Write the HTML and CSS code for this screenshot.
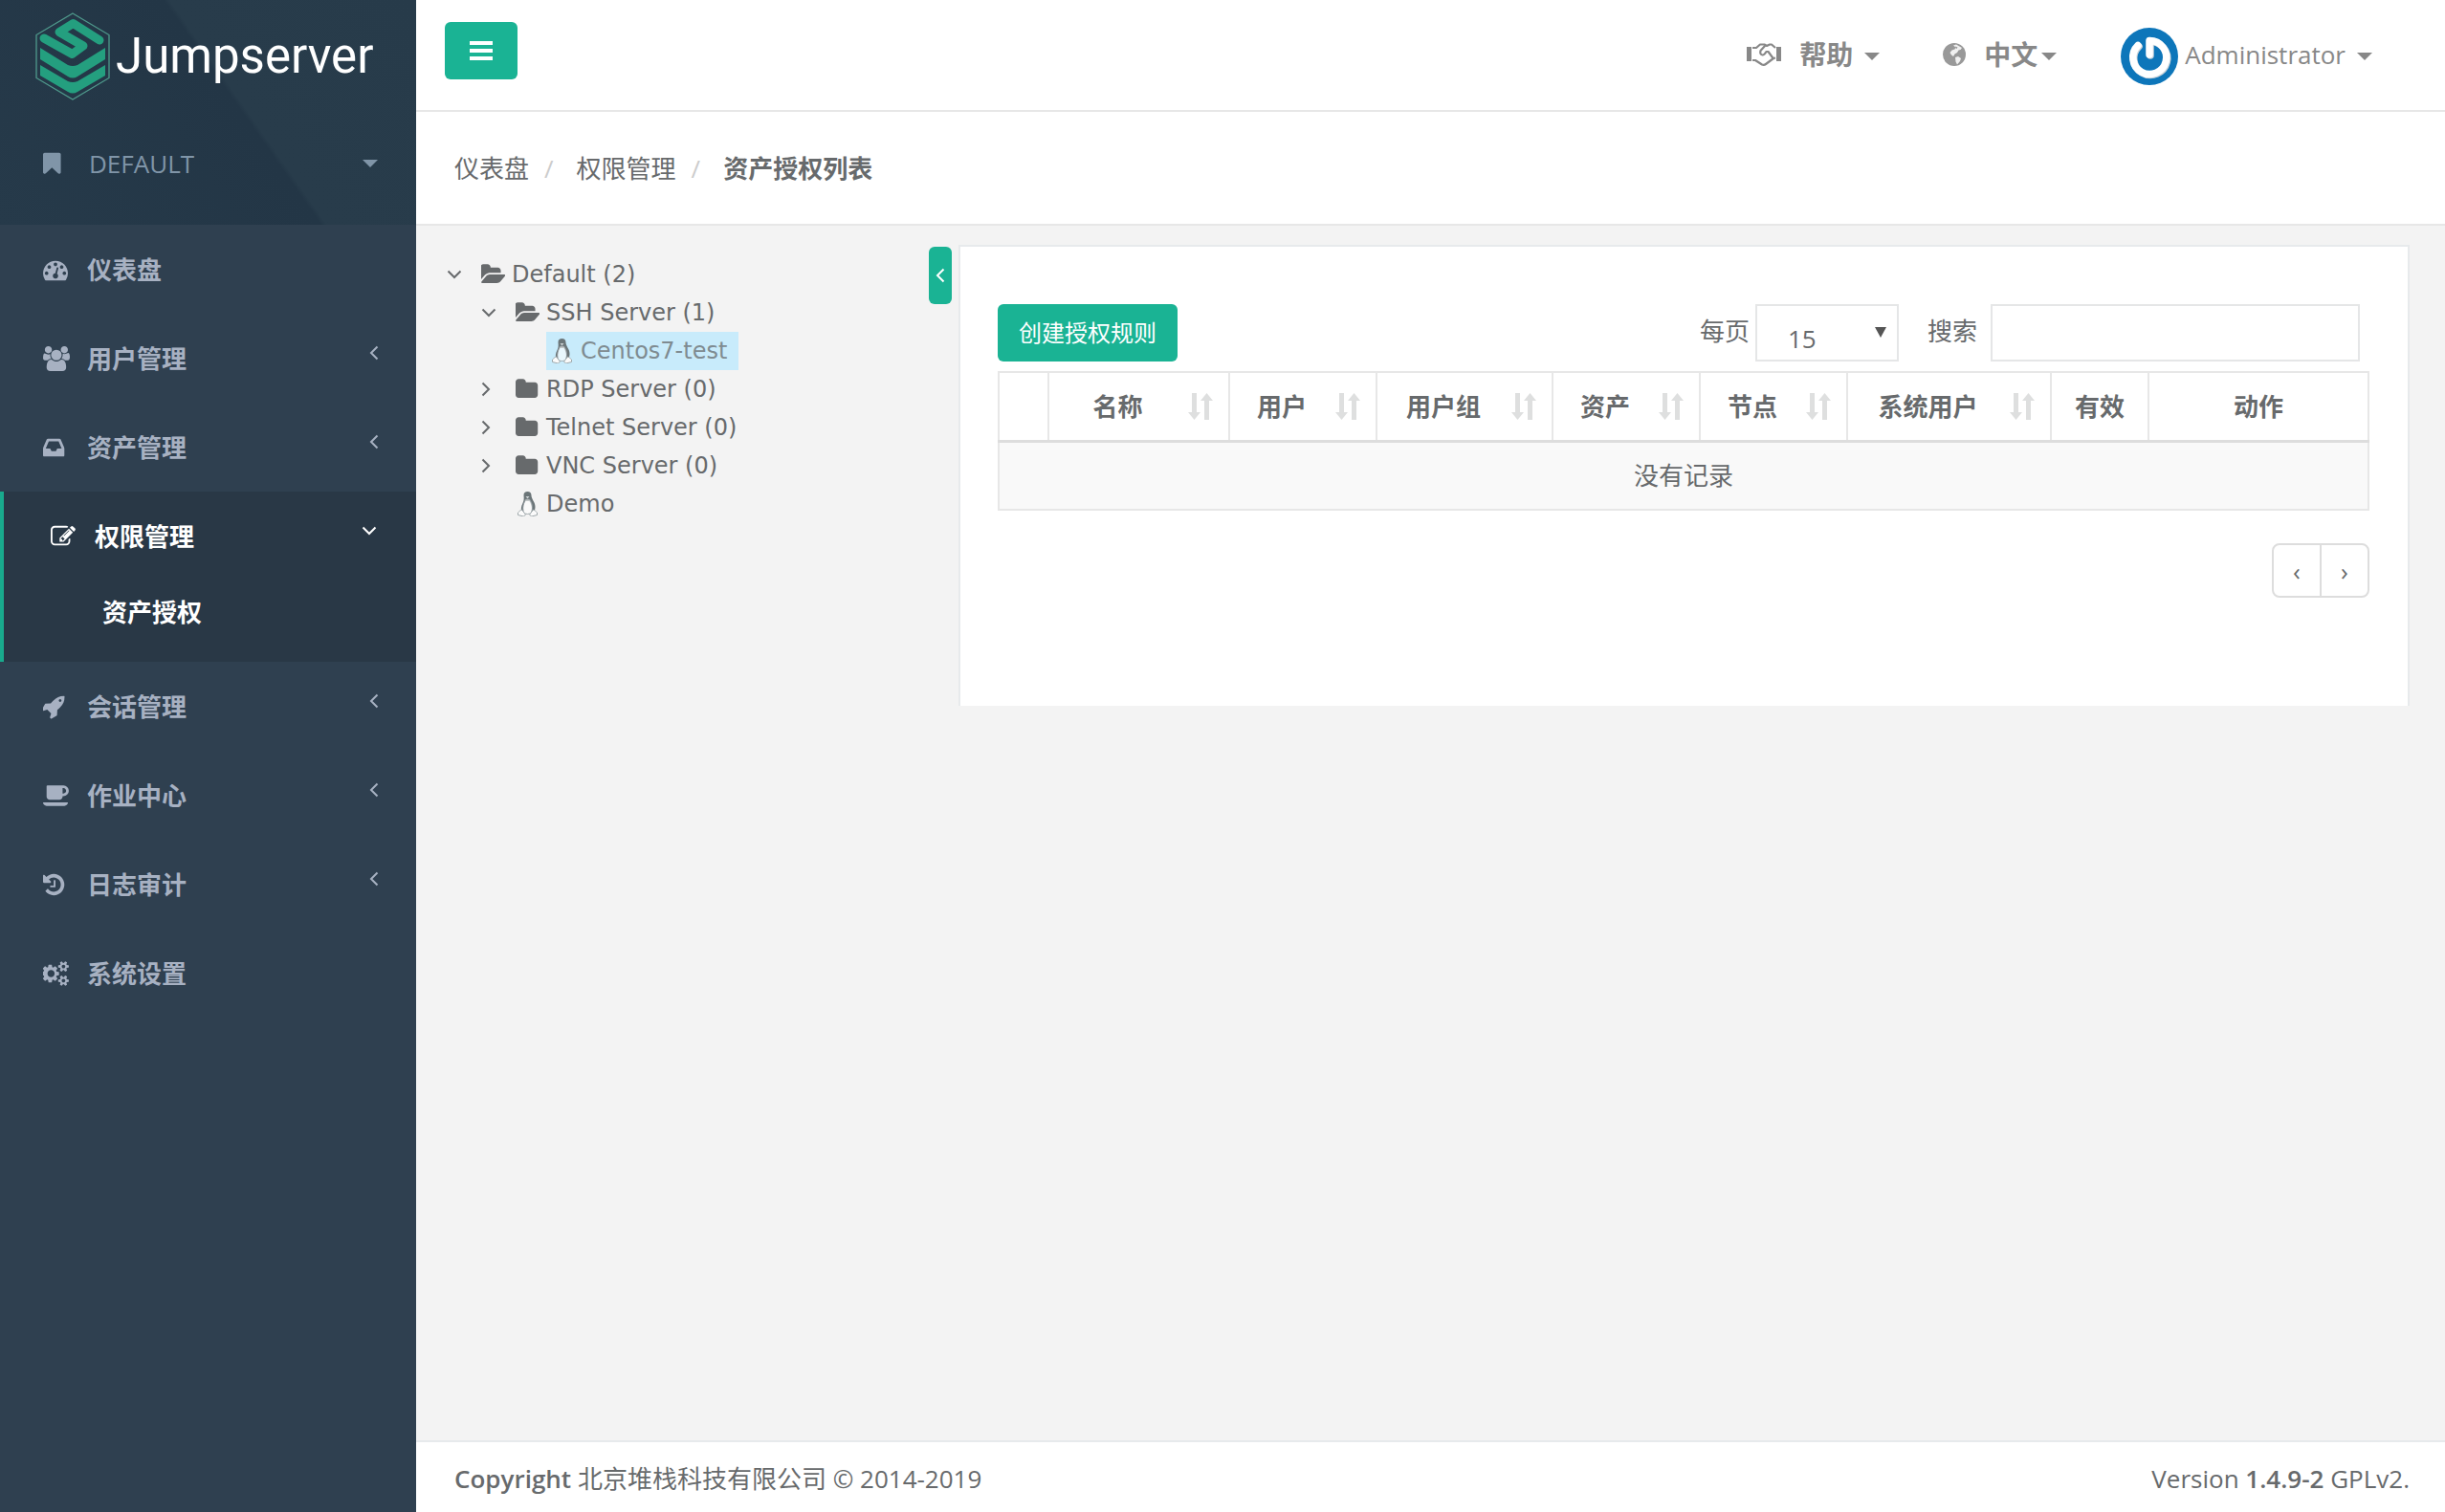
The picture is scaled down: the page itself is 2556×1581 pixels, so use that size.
FILE: index.html
```html
<!DOCTYPE html>
<html lang="zh-CN">
<head>
<meta charset="utf-8">
<title>Jumpserver</title>
<link rel="stylesheet" href="styles.css">
</head>
<body>
<svg class="sprite" aria-hidden="true">
  <symbol id="folder" viewBox="64 0 1792 1792" preserveAspectRatio="xMinYMid"><path d="M1728 608v704q0 92-66 158t-158 66h-1216q-92 0-158-66t-66-158v-960q0-92 66-158t158-66h320q92 0 158 66t66 158v32h672q92 0 158 66t66 158z"/></symbol>
  <symbol id="folder-open" viewBox="0 0 1792 1792" preserveAspectRatio="xMinYMid"><path d="M1815 952q0 31-31 66l-336 396q-43 51-120.5 86.5t-143.5 35.5h-1088q-34 0-60.5-13t-26.5-43q0-31 31-66l336-396q43-51 120.5-86.5t143.5-35.5h1088q34 0 60.5 13t26.5 43zm-343-344v160h-832q-94 0-197 47.5t-164 119.5l-337 396-5 6q0-4-.5-12.5t-.5-12.5v-960q0-92 66-158t158-66h320q92 0 158 66t66 158v32h544q92 0 158 66t66 158z"/></symbol>
  <symbol id="left" viewBox="0 0 10 16"><path d="M8.500 1.500L2 8l6.500 6.500" fill="none" stroke="currentColor" stroke-width="2"/></symbol>
  <symbol id="right" viewBox="0 0 10 16"><path d="M1.500 1.500L8 8l-6.500 6.500" fill="none" stroke="currentColor" stroke-width="2"/></symbol>
  <symbol id="down" viewBox="0 0 16 10"><path d="M1.500 1.500L8 8l6.500-6.500" fill="none" stroke="currentColor" stroke-width="2"/></symbol>
  <symbol id="sort" viewBox="0 0 26 28"><path d="M4 0h5v20h4l-6.500 8L0 20h4zM17 28V8h-4L19.500 0 26 8h-4v20z"/></symbol>
  <symbol id="tux" viewBox="0 0 22 26"><path d="M7 4c0-3 1.500-4 4-4s4 1.500 4 4c0 4 4 7 4 12 0 3-1 5-2 6l-2-1c1-4 0-8-2-11H9c-2 3-3 6-2 10l-2 1c-1-3-1-5 1-9 1-2 1.500-4 1-8z" fill="#6b7578"/><path d="M9 8h4c3 4 4 9 2 14-2 2-6 2-8 0-2-5 0-10 2-14z" fill="#fff" fill-opacity=".6" stroke="#8d969a" stroke-width=".8"/><path d="M1 22c1-1 3-3 4-3l4 5-2 2-6-1.500zM21 22c-1-1-3-3-4-3l-4 5 2 2 6-1.500z" fill="#fbfbfb" stroke="#9fa8ab"/><path d="M9 5h4l-2 2.500z" fill="#ccd2d4"/></symbol>
</svg>

<nav class="sidebar">
  <div class="brand">
    <a class="logo" href="#">
      <svg class="logo-mark" viewBox="0 0 78 92" aria-hidden="true">
        <path d="M39 1L77 23.500v45L39 91 1 68.500v-45z" fill="none" stroke="#4f9a8c" stroke-width="1.300"/>
        <path d="M67 29L39.500 11.500 25 20.500 50 35 38.500 43.500 9 27" fill="none" stroke="#249f7f" stroke-width="9" stroke-linejoin="round" stroke-linecap="round"/>
        <g fill="#249f7f">
          <path d="M5 37l29 18q5 2 10 0l29-18v12L44 67q-5 3-10 0L5 49z"/>
          <path d="M5 55l29 17q5 2 10 0l29-17v11L44 83q-5 3-10 0L5 66z"/>
        </g>
      </svg>
      <span class="logo-text">Jumpserver</span>
    </a>
    <a class="org" href="#">
      <svg class="icon" viewBox="256 0 1536 1792" preserveAspectRatio="xMinYMid"><path d="M1420 128q23 0 44 9 33 13 52.500 41t19.500 62v1289q0 34-19.500 62t-52.500 41q-19 8-44 8-48 0-83-32l-441-424-441 424q-36 33-83 33-23 0-44-9-33-13-52.500-41t-19.500-62v-1289q0-34 19.500-62t52.500-41q21-9 44-9h1048z"/></svg>
      <span class="label">DEFAULT</span>
      <span class="caret"></span>
    </a>
  </div>
  <ul class="menu">
    <li><a href="#"><svg class="icon" viewBox="0 0 1920 1792" preserveAspectRatio="xMinYMid"><path d="M384 1152q0-53-37.500-90.500t-90.500-37.500-90.500 37.500-37.500 90.500 37.500 90.500 90.500 37.500 90.500-37.500 37.500-90.500zm192-448q0-53-37.500-90.500t-90.500-37.500-90.500 37.500-37.500 90.500 37.500 90.500 90.500 37.500 90.500-37.500 37.500-90.500zm428 481l101-382q6-26-7.500-48.500t-38.500-29.500-48 6.500-30 39.500l-101 382q-60 5-107 43.500t-63 98.500q-20 77 20 146t117 89 146-20 89-117q16-60-6-117t-72-91zm660-33q0-53-37.500-90.500t-90.500-37.500-90.500 37.500-37.500 90.500 37.500 90.500 90.500 37.500 90.500-37.500 37.500-90.500zm-640-640q0-53-37.500-90.500t-90.500-37.500-90.500 37.500-37.500 90.500 37.500 90.500 90.500 37.500 90.500-37.500 37.500-90.500zm448 192q0-53-37.500-90.500t-90.500-37.500-90.500 37.500-37.500 90.500 37.500 90.500 90.500 37.500 90.500-37.500 37.500-90.500zm320 448q0 261-141 483-19 29-54 29h-1402q-35 0-54-29-141-221-141-483 0-182 71-348t191-286 286-191 348-71 348 71 286 191 191 286 71 348z"/></svg><span class="label">仪表盘</span></a></li>
    <li><a href="#"><svg class="icon" viewBox="0 0 1920 1792" preserveAspectRatio="xMinYMid"><path d="M593 896q-162 5-265 128h-134q-82 0-138-40.500t-56-118.500q0-353 124-353 6 0 43.500 21t97.500 42.500 119 21.500q67 0 133-23-5 37-5 66 0 159 93 293zm1071 637q0 120-73 189.500t-194 69.500h-874q-121 0-194-69.500t-73-189.500q0-53 3.500-103.500t14-109 26.500-108.500 43-97.500 62-81 85.500-53.500 111.500-20q10 0 43 21.500t73 48 107 48 135 21.500 135-21.500 107-48 73-48 43-21.500q61 0 111.500 20t85.500 53.500 62 81 43 97.500 26.500 108.500 14 109 3.500 103.500zm-1024-1277q0 106-75 181t-181 75-181-75-75-181 75-181 181-75 181 75 75 181zm704 384q0 159-112.500 271.500t-271.500 112.500-271.500-112.500-112.500-271.500 112.500-271.500 271.500-112.500 271.500 112.500 112.500 271.500zm576 225q0 78-56 118.500t-138 40.500h-134q-103-123-265-128 93-134 93-293 0-29-5-66 66 23 133 23 59 0 119-21.500t97.500-42.500 43.500-21q124 0 124 353zm-128-609q0 106-75 181t-181 75-181-75-75-181 75-181 181-75 181 75 75 181z"/></svg><span class="label">用户管理</span><svg class="arrow"><use href="#left"/></svg></a></li>
    <li><a href="#"><svg class="icon" viewBox="128 0 1792 1792" preserveAspectRatio="xMinYMid"><path d="M1151 960h316q-1-3-2.500-8t-2.500-8l-212-496h-708l-212 496q-1 2-2.500 8t-2.500 8h316l95 192h320zm513 30v482q0 26-19 45t-45 19h-1408q-26 0-45-19t-19-45v-482q0-62 25-123l238-552q10-25 36.500-42t52.500-17h832q26 0 52.500 17t36.500 42l238 552q25 61 25 123z"/></svg><span class="label">资产管理</span><svg class="arrow"><use href="#left"/></svg></a></li>
    <li class="active">
      <a href="#"><svg class="icon" viewBox="0 0 1920 1792" preserveAspectRatio="xMinYMid"><path d="M888 1184l116-116-152-152-116 116v56h96v96h56zm440-720q-16-16-33 1l-350 350q-17 17-1 33t33-1l350-350q17-17 1-33zm80 594v190q0 119-84.500 203.500t-203.500 84.500h-832q-119 0-203.500-84.500t-84.500-203.500v-832q0-119 84.500-203.500t203.500-84.500h832q63 0 117 25 15 7 18 23 3 17-9 29l-49 49q-14 14-32 8-23-6-45-6h-832q-66 0-113 47t-47 113v832q0 66 47 113t113 47h832q66 0 113-47t47-113v-126q0-13 9-22l64-64q15-15 35-7t20 29zm-96-738l288 288-672 672h-288v-288zm444 132l-92 92-288-288 92-92q28-28 68-28t68 28l152 152q28 28 28 68t-28 68z"/></svg><span class="label">权限管理</span><svg class="arrow wide"><use href="#down"/></svg></a>
      <ul class="submenu"><li><a href="#">资产授权</a></li></ul>
    </li>
    <li><a href="#"><svg class="icon" viewBox="112 0 1792 1792" preserveAspectRatio="xMinYMid"><path d="M1440 448q0-40-28-68t-68-28-68 28-28 68 28 68 68 28 68-28 28-68zm224-288q0 249-75.500 430.500t-253.500 360.500q-81 80-195 176l-20 379q-2 16-16 26l-384 224q-7 4-16 4-12 0-23-9l-64-64q-13-14-8-32l85-276-281-281-276 85q-3 1-9 1-14 0-23-9l-64-64q-17-19-5-39l224-384q10-14 26-16l379-20q96-114 176-195 188-187 358-258t431-71q14 0 24 9.500t10 22.500z"/></svg><span class="label">会话管理</span><svg class="arrow"><use href="#left"/></svg></a></li>
    <li><a href="#"><svg class="icon" viewBox="0 0 1920 1792" preserveAspectRatio="xMinYMid"><path d="M1664 544q0-80-56-136t-136-56h-64v384h64q80 0 136-56t56-136zm-1664 832h1792q0 106-75 181t-181 75h-1280q-106 0-181-75t-75-181zm1856-832q0 159-112.500 271.500t-271.500 112.500h-64v32q0 92-66 158t-158 66h-704q-92 0-158-66t-66-158v-736q0-26 19-45t45-19h1152q159 0 271.500 112.500t112.500 271.500z"/></svg><span class="label">作业中心</span><svg class="arrow"><use href="#left"/></svg></a></li>
    <li><a href="#"><svg class="icon" viewBox="128 0 1792 1792" preserveAspectRatio="xMinYMid"><path d="M1664 896q0 156-61 298t-164 245-245 164-298 61q-172 0-327-72.500t-264-204.500q-7-10-6.500-22.500t8.500-20.500l137-138q10-9 25-9 16 2 23 12 73 95 179 147t225 52q104 0 198.500-40.500t163.500-109.500 109.500-163.500 40.500-198.500-40.500-198.500-109.500-163.500-163.500-109.500-198.500-40.500q-98 0-188 35.500t-160 101.500l137 138q31 30 14 69-17 40-59 40h-448q-26 0-45-19t-19-45v-448q0-42 40-59 39-17 69 14l130 129q107-101 244.500-156.500t284.500-55.500q156 0 298 61t245 164 164 245 61 298zm-640-288v448q0 14-9 23t-23 9h-320q-14 0-23-9t-9-23v-64q0-14 9-23t23-9h224v-352q0-14 9-23t23-9h64q14 0 23 9t9 23z"/></svg><span class="label">日志审计</span><svg class="arrow"><use href="#left"/></svg></a></li>
    <li><a href="#"><svg class="icon" viewBox="0 0 1920 1792" preserveAspectRatio="xMinYMid"><path d="M832 896q0-106-75-181t-181-75-181 75-75 181 75 181 181 75 181-75 75-181zm768 512q0-52-38-90t-90-38-90 38-38 90q0 53 37.500 90.500t90.500 37.500 90.500-37.500 37.500-90.500zm0-1024q0-52-38-90t-90-38-90 38-38 90q0 53 37.500 90.500t90.500 37.500 90.500-37.500 37.500-90.500zm-448 421v185q0 10-7 19.500t-16 10.500l-155 24q-11 35-32 76 34 48 90 115 7 11 7 20 0 12-7 19-23 30-82.500 89.500t-78.500 59.500q-11 0-21-7l-115-90q-37 19-77 31-11 108-23 155-7 24-30 24h-186q-11 0-20-7.500t-10-17.500l-23-153q-34-10-75-31l-118 89q-7 7-20 7-11 0-21-8-144-133-144-160 0-9 7-19 10-14 41-53t47-61q-23-44-35-82l-152-24q-10-1-17-9.500t-7-19.500v-185q0-10 7-19.500t16-10.500l155-24q11-35 32-76-34-48-90-115-7-11-7-20 0-12 7-20 22-30 82-89t79-59q11 0 21 7l115 90q34-18 77-32 11-108 23-154 7-24 30-24h186q11 0 20 7.500t10 17.500l23 153q34 10 75 31l118-89q8-7 20-7 11 0 21 8 144 133 144 160 0 8-7 19-12 16-42 54t-45 60q23 48 34 82l152 23q10 2 17 10.500t7 19.500zm704 533v140q0 16-149 31-12 27-30 52 51 113 51 138 0 4-4 7-122 71-124 71-8 0-46-47t-52-68q-20 2-30 2t-30-2q-14 21-52 68t-46 47q-2 0-124-71-4-3-4-7 0-25 51-138-18-25-30-52-149-15-149-31v-140q0-16 149-31 13-29 30-52-51-113-51-138 0-4 4-7 4-2 35-20t59-34 30-16q8 0 46 46.500t52 67.500q20-2 30-2t30 2q51-71 92-112l6-2q4 0 124 70 4 3 4 7 0 25-51 138 17 23 30 52 149 15 149 31zm0-1024v140q0 16-149 31-12 27-30 52 51 113 51 138 0 4-4 7-122 71-124 71-8 0-46-47t-52-68q-20 2-30 2t-30-2q-14 21-52 68t-46 47q-2 0-124-71-4-3-4-7 0-25 51-138-18-25-30-52-149-15-149-31v-140q0-16 149-31 13-29 30-52-51-113-51-138 0-4 4-7 4-2 35-20t59-34 30-16q8 0 46 46.500t52 67.500q20-2 30-2t30 2q51-71 92-112l6-2q4 0 124 70 4 3 4 7 0 25-51 138 17 23 30 52 149 15 149 31z"/></svg><span class="label">系统设置</span></a></li>
  </ul>
</nav>

<div class="page">
  <header class="topbar">
    <button class="toggle-menu" type="button" aria-label="切换菜单"><svg viewBox="0 0 24 20" aria-hidden="true"><path d="M0 0h24v4H0zM0 8h24v4H0zM0 16h24v4H0z"/></svg></button>
    <div class="top-links">
      <a class="top-link help" href="#">
        <svg class="handshake" viewBox="0 0 36 24"><path d="M0 4h5v15H0zM31 4h5v15h-5z"/><path d="M6 5h4l4-3.500h4.500L21 3l3-1.500h2L30 5M6 18h3l7 4.500q2 1 4-.5l8-6 2-.500M19 3l-4.500 5q-1 4 2 4.500 2 0 4-3.500h2l5.500 7.500" fill="none" stroke="currentColor" stroke-width="2.200" stroke-linejoin="round"/></svg>
        <strong>帮助</strong><span class="caret"></span>
      </a>
      <a class="top-link lang" href="#">
        <svg class="globe" viewBox="0 0 24 24"><circle cx="12" cy="12" r="12"/><path d="M11 2.500l3-1 2.500 1.500 3.500 2-1.500 2-2 .5L15 10l-2.500 1.500L11 14l-2-1.500L7.500 10l2-2.500 3-1 1-2zM13 15l3-1 3 2-1 3-3 3.500-1.500-3z" fill="#fff" opacity=".85"/><path d="M13.500 3.500l2 1-1 1.500-1.500-1z"/></svg>
        <strong>中文</strong><span class="caret"></span>
      </a>
      <a class="top-link user" href="#">
        <svg class="avatar" viewBox="0 0 60 60"><circle cx="30" cy="30" r="30" fill="#0d76ba"/><g fill="none" stroke-width="7.500" stroke-linecap="round" stroke-linejoin="round"><path d="M19 19.500A17.500 17.500 0 1 0 31 14.500V29" stroke="#c9d3da"/><path d="M18 18.500A17.500 17.500 0 1 0 30 13.500V28" stroke="#fff"/></g></svg>
        <span>Administrator</span><span class="caret"></span>
      </a>
    </div>
  </header>

  <ol class="breadcrumb">
    <li><a href="#">仪表盘</a></li>
    <li><a href="#">权限管理</a></li>
    <li><strong>资产授权列表</strong></li>
  </ol>

  <main class="content">
    <ul class="tree">
      <li>
        <a href="#"><svg class="tw"><use href="#down"/></svg><svg class="node-icon"><use href="#folder-open"/></svg>Default (2)</a>
        <ul>
          <li>
            <a href="#"><svg class="tw"><use href="#down"/></svg><svg class="node-icon"><use href="#folder-open"/></svg>SSH Server (1)</a>
            <ul><li class="leaf"><a class="selected" href="#"><svg class="node-icon"><use href="#tux"/></svg>Centos7-test</a></li></ul>
          </li>
          <li><a href="#"><svg class="tw closed"><use href="#right"/></svg><svg class="node-icon"><use href="#folder"/></svg>RDP Server (0)</a></li>
          <li><a href="#"><svg class="tw closed"><use href="#right"/></svg><svg class="node-icon"><use href="#folder"/></svg>Telnet Server (0)</a></li>
          <li><a href="#"><svg class="tw closed"><use href="#right"/></svg><svg class="node-icon"><use href="#folder"/></svg>VNC Server (0)</a></li>
          <li class="leaf"><a href="#"><svg class="node-icon"><use href="#tux"/></svg>Demo</a></li>
        </ul>
      </li>
    </ul>
    <button class="split" type="button" aria-label="收起"><svg><use href="#left"/></svg></button>
    <section class="panel">
      <div class="tools">
        <button class="create" type="button">创建授权规则</button>
        <div class="filters">
          <label for="size">每页</label>
          <span class="select-box"><select id="size"><option>15</option><option>25</option><option>50</option></select></span>
          <label class="search-label" for="search">搜索</label>
          <input id="search" type="text">
        </div>
      </div>
      <table>
        <colgroup><col class="c-check"><col class="c-name"><col class="c-std"><col class="c-group"><col class="c-std"><col class="c-std"><col class="c-sys"><col class="c-valid"><col></colgroup>
        <thead><tr>
          <th></th>
          <th><span class="th sortable">名称<svg><use href="#sort"/></svg></span></th>
          <th><span class="th sortable">用户<svg><use href="#sort"/></svg></span></th>
          <th><span class="th sortable">用户组<svg><use href="#sort"/></svg></span></th>
          <th><span class="th sortable">资产<svg><use href="#sort"/></svg></span></th>
          <th><span class="th sortable">节点<svg><use href="#sort"/></svg></span></th>
          <th><span class="th sortable">系统用户<svg><use href="#sort"/></svg></span></th>
          <th><span class="th">有效</span></th>
          <th><span class="th">动作</span></th>
        </tr></thead>
        <tbody><tr><td colspan="9">没有记录</td></tr></tbody>
      </table>
      <div class="pager"><button type="button" aria-label="上一页">‹</button><button type="button" aria-label="下一页">›</button></div>
    </section>
  </main>

  <footer class="footer">
    <div><strong>Copyright</strong> 北京堆栈科技有限公司 © 2014-2019</div>
    <div>Version <strong>1.4.9-2</strong> GPLv2.</div>
  </footer>
</div>
</body>
</html>
```
FILE: styles.css
```css
* { box-sizing: border-box; }
body {
  margin: 0;
  display: flex;
  min-height: 100vh;
  background: #2f4050;
  color: #676a6c;
  font: 26px/36px "Open Sans", "Noto Sans CJK SC", sans-serif;
}
a { color: inherit; text-decoration: none; }
ul, ol { list-style: none; margin: 0; padding: 0; }
button, input, select { font: inherit; color: inherit; }
button { cursor: pointer; padding: 0; }
svg { display: block; flex: none; fill: currentColor; }
.sprite { position: absolute; width: 0; height: 0; }
.caret {
  width: 0;
  border: 8px solid transparent;
  border-top-color: currentColor;
  border-bottom: 0;
}

/* sidebar */
.sidebar { flex: none; width: 435px; }
.brand {
  height: 235px;
  padding-top: 13px;
  background: linear-gradient(235deg, #273b4a 0, #283c4b 43%, #233646 44%, #263a4a 100%);
}
.logo { display: flex; align-items: flex-start; gap: 6px; padding-left: 37px; }
.logo-mark { width: 78px; height: 92px; }
.logo-text { color: #fff; font: 400 51px/92px Roboto, sans-serif; }
.org {
  display: flex;
  align-items: center;
  padding: 0 40px 0 45px;
  margin-top: 48px;
  color: #8095a8;
}
.org .label { flex: 1; }
.icon { width: 28px; height: 26px; margin-right: 18px; }
.org .icon { margin-right: 20px; }
.menu { color: #a7b1c2; font-weight: 700; }
.menu a { display: flex; align-items: center; height: 93px; padding: 0 39px 0 45px; }
.menu .label { flex: 1; }
.arrow { width: 10px; height: 16px; margin-bottom: 12px; }
.arrow.wide { width: 16px; height: 10px; }
.active { background: #293846; color: #fff; border-left: 4px solid #19aa8d; padding-bottom: 20px; }
.active > a { padding: 0 41px 0 49px; }
.menu .submenu a { height: 65px; padding-left: 103px; }

/* page */
.page { flex: 1; min-width: 0; display: flex; flex-direction: column; background: #f3f3f3; }
.topbar {
  display: flex;
  justify-content: space-between;
  height: 117px;
  padding: 0 76px 0 30px;
  background: #fff;
  border-bottom: 2px solid #e7e7e7;
}
.toggle-menu {
  width: 76px;
  height: 60px;
  margin-top: 23px;
  border: 0;
  border-radius: 6px;
  background: #1ab394;
  color: #fff;
  display: grid;
  place-items: center;
}
.toggle-menu svg { width: 24px; height: 20px; }
.top-links { display: flex; color: #888; }
.top-link { display: flex; align-items: center; height: 113px; }
.top-link strong { font-size: 28px; }
.top-link .caret { margin-top: 4px; }
.handshake { width: 36px; height: 24px; margin-right: 19px; }
.help .caret { margin-left: 12px; }
.lang { margin-left: 66px; }
.globe { width: 24px; height: 24px; margin-right: 19px; color: #999; }
.lang .caret { margin-left: 4px; }
.user { margin-left: 67px; }
.avatar { width: 60px; height: 60px; margin: 4px 7px 0 0; }
.user .caret { margin-left: 12px; }
.breadcrumb {
  display: flex;
  align-items: center;
  height: 119px;
  padding-left: 40px;
  background: #fff;
  border-bottom: 2px solid #e7e7e7;
}
.breadcrumb li + li::before { content: "/"; color: #ccc; padding: 0 24px 0 16px; }
.content { flex: 1; display: flex; align-items: flex-start; padding: 20px 37px 20px 0; }

/* tree */
.tree { width: 536px; padding: 11px 0 0 32px; font: 24px/40px "DejaVu Sans", sans-serif; }
.tree ul { padding-left: 36px; }
.tree a { display: flex; align-items: center; width: max-content; }
.tree .leaf { padding-left: 32px; }
.tree .leaf a { padding: 0 12px 0 4px; }
.tree .tw { width: 16px; height: 10px; margin-right: 20px; }
.tree .tw.closed { width: 10px; height: 16px; margin-right: 26px; }
.node-icon { width: 25px; height: 26px; margin-right: 7px; }
.selected { background: #c8ebfb; color: #7f8b91; }
.split {
  flex: none;
  width: 24px;
  height: 60px;
  margin: 2px 7px 0 0;
  border: 0;
  border-radius: 6px;
  background: #1ab394;
  color: #fff;
  display: grid;
  place-items: center;
}
.split svg { width: 10px; height: 16px; }

/* panel */
.panel {
  flex: 1;
  min-width: 0;
  padding: 60px 40px 113px 39px;
  background: #fff;
  border: 2px solid #e7eaec;
  border-bottom-width: 0;
}
.tools { display: flex; justify-content: space-between; margin-bottom: 10px; }
.create {
  width: 188px;
  height: 60px;
  border: 0;
  border-radius: 6px;
  background: #1ab394;
  color: #fff;
  font-size: 24px;
}
.filters { display: flex; align-items: center; padding-right: 10px; }
.filters label { margin-bottom: 4px; }
.select-box { position: relative; margin: 0 30px 0 6px; }
.select-box::after {
  content: "";
  position: absolute;
  right: 13px;
  top: 24px;
  border: 6px solid transparent;
  border-top: 11px solid #555;
  border-bottom: 0;
  pointer-events: none;
}
select {
  display: block;
  appearance: none;
  width: 150px;
  height: 60px;
  padding: 12px 32px 0;
  border: 2px solid #e5e6e7;
  border-radius: 0;
  background: #fff;
}
.search-label { margin-right: 14px; }
input { width: 386px; height: 60px; padding: 0 24px; border: 2px solid #e5e6e7; }
table { width: 100%; table-layout: fixed; border-collapse: collapse; }
.c-check { width: 52px; }
.c-name { width: 189px; }
.c-std { width: 154px; }
.c-group { width: 184px; }
.c-sys { width: 213px; }
.c-valid { width: 102px; }
th, td { height: 72px; padding: 0; border: 2px solid #e7e7e7; text-align: center; }
th { border-bottom: 3px solid #ddd; }
td { background: #f9f9f9; }
.th { display: flex; align-items: center; justify-content: center; }
.sortable { position: relative; padding-right: 44px; }
.sortable svg { position: absolute; right: 16px; width: 26px; height: 28px; color: #dedfdf; }
.pager { display: flex; justify-content: flex-end; margin-top: 34px; }
.pager button { width: 52px; height: 57px; border: 2px solid #ddd; background: #fff; }
.pager button:first-child { border-radius: 8px 0 0 8px; }
.pager button:last-child { border-radius: 0 8px 8px 0; margin-left: -2px; }

.footer {
  display: flex;
  justify-content: space-between;
  align-items: center;
  height: 75px;
  padding: 2px 37px 0 40px;
  background: #fff;
  border-top: 2px solid #e7eaec;
}
.footer strong { font-weight: 600; }
```
